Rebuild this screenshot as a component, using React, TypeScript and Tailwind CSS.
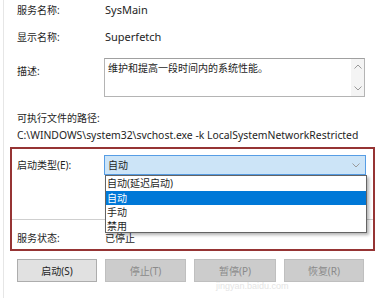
import React from "react";

const font = { fontFamily: '"Noto Sans", "Noto Sans CJK SC", sans-serif' };

function Chevron({ up }: { up?: boolean }) {
  return (
    <svg width="8" height="5" viewBox="0 0 8 5" className="block">
      <path d={up ? "M0.5 4.5 L4 1 L7.5 4.5" : "M0.5 0.5 L4 4 L7.5 0.5"} fill="none" stroke="#9a9a9a" strokeWidth="1" />
    </svg>
  );
}

export default function App() {
  return (
    <div className="relative w-[379px] h-[298px] overflow-hidden bg-white text-[10px] leading-[16px] text-[#1e1e1e]" style={font}>
      <div className="absolute left-[3px] top-0 bottom-0 w-px bg-[#e6e6e6]" />
      <div className="pl-[17px] pt-[2px]">
        <div className="flex h-[16px]">
          <div className="w-[88px]">服务名称:</div>
          <div className="text-[11px]">SysMain</div>
        </div>
        <div className="flex h-[16px] mt-[11px]">
          <div className="w-[88px]">显示名称:</div>
          <div className="text-[11px]">Superfetch</div>
        </div>
        <div className="flex mt-[13px]">
          <div className="w-[87px] pt-[5px]">描述:</div>
          <div className="flex w-[261px] h-[39px] border border-[#b4b4b4] border-t-[#a0a0a0]">
            <div className="flex-1 pl-[3px] pt-[1px]">维护和提高一段时间内的系统性能。</div>
            <div className="w-[13px] flex flex-col items-center justify-between py-[5px] bg-[#f4f4f4]">
              <Chevron up />
              <Chevron />
            </div>
          </div>
        </div>
        <div className="mt-[13px] h-[16px]">可执行文件的路径:</div>
        <div className="mt-[1px] h-[16px] whitespace-nowrap text-[10.4px]">C:\WINDOWS\system32\svchost.exe -k LocalSystemNetworkRestricted</div>
      </div>

      <div className="relative ml-[10px] mt-[4px] w-[365px] h-[104px] border-2 border-[#963434]">
        <div className="absolute left-[5px] top-[8px]">启动类型(E):</div>
        <div className="absolute left-[92px] top-[6px] w-[262px] h-[20px] bg-[#cce4f7] border border-[#569de5] flex items-center justify-between pl-[3px] pr-[5px]">
          <span>自动</span>
          <Chevron />
        </div>
        <div className="absolute left-0 right-0 top-[70px] h-px bg-[#cfcfcf]" />
        <div className="absolute left-[5px] top-[81px]">服务状态:</div>
        <div className="absolute left-[93px] top-[81px]">已停止</div>
        <div className="absolute left-[93px] top-[26px] w-[262px] h-[58px] bg-white border border-[#646464] shadow-[2px_2px_3px_rgba(0,0,0,0.3)] flex flex-col">
          <div className="h-[15px] leading-[15px] pl-[1px]">自动(延迟启动)</div>
          <div className="h-[14px] leading-[14px] pl-[1px] bg-[#0078d7] text-white">自动</div>
          <div className="h-[14px] leading-[14px] pl-[1px]">手动</div>
          <div className="h-[14px] leading-[14px] pl-[1px]">禁用</div>
        </div>
      </div>

      <div className="flex gap-[8px] pl-[17px] mt-[8px]">
        <div className="w-[80px] h-[23px] bg-[#e1e1e1] border border-[#adadad] flex items-center justify-center">启动(S)</div>
        <div className="w-[81px] h-[23px] bg-[#cccccc] border border-[#bfbfbf] text-[#8a8a8a] flex items-center justify-center">停止(T)</div>
        <div className="w-[82px] h-[23px] bg-[#cccccc] border border-[#bfbfbf] text-[#8a8a8a] flex items-center justify-center">暂停(P)</div>
        <div className="w-[80px] h-[23px] bg-[#cccccc] border border-[#bfbfbf] text-[#8a8a8a] flex items-center justify-center">恢复(R)</div>
      </div>

      <div className="absolute left-[216px] top-[280px] text-[9px] leading-[12px] text-[#e4e4e4]" style={{ fontFamily: '"Liberation Sans", sans-serif' }}>jingyan.baidu.com</div>
    </div>
  );
}
